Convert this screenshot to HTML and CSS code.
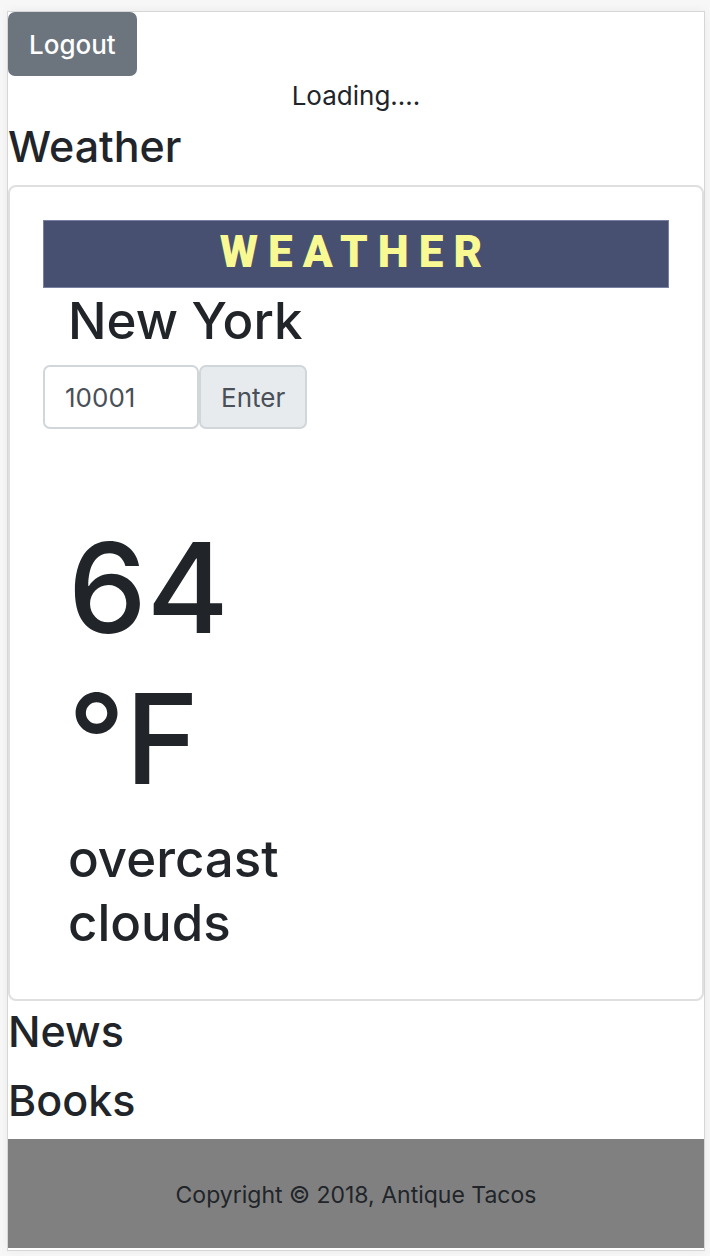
FILE: index.html
```html
<!DOCTYPE html>
<html lang="en">
<head>
<meta charset="utf-8">
<meta name="viewport" content="width=device-width, initial-scale=1">
<title>Dashboard</title>
<link rel="stylesheet" href="styles.css">
</head>
<body>
<div class="page">
  <header class="top">
    <button class="logout" type="button">Logout</button>
    <p class="loading">Loading....</p>
  </header>
  <main>
    <h2 class="section-title">Weather</h2>
    <section class="card">
      <h3 class="banner">WEATHER</h3>
      <h1 class="city">New York</h1>
      <form class="zip">
        <input class="zip-input" type="text" value="10001" aria-label="Zip code">
        <button class="zip-enter" type="button">Enter</button>
      </form>
      <div class="reading">
        <p class="temp">64 °F</p>
        <p class="sky">overcast clouds</p>
      </div>
    </section>
    <h2 class="section-title">News</h2>
    <h2 class="section-title">Books</h2>
  </main>
  <footer class="footer">Copyright © 2018, Antique Tacos</footer>
</div>
</body>
</html>
```
FILE: styles.css
```css
* { box-sizing: border-box; }
body {
  margin: 0;
  padding: 11px 5px 5px 7px;
  background: #f7f7f7;
  color: #212529;
  font-family: Inter, "Liberation Sans", sans-serif;
  font-size: 26px;
}
h1, h2, h3, p { margin: 0; font-weight: 500; }
.page {
  padding-bottom: 2px;
  background: #fff;
  border: 1px solid #d6d6d6;
  box-shadow: 0 0 10px rgba(0, 0, 0, 0.05);
}
.logout {
  display: block;
  height: 64px;
  padding: 0 21px;
  border: 0;
  border-radius: 7px;
  background: #6c757d;
  color: #fff;
  font: 500 26px Inter, sans-serif;
}
.loading { font-weight: 400; line-height: 40px; text-align: center; }
.section-title { font-size: 43px; line-height: 60px; padding-bottom: 9px; }
.card {
  border: 2px solid #dfdfdf;
  border-radius: 8px;
  padding: 33px;
}
.banner {
  height: 68px;
  border: 1px solid #7a80a0;
  background: #475070;
  color: #f9f993;
  font: 900 44px/62px Roboto, sans-serif;
  letter-spacing: 10px;
  text-align: center;
}
.city { font-size: 51px; line-height: 60px; padding: 3px 25px 14px; }
.zip { display: flex; }
.zip-input, .zip-enter {
  height: 64px;
  border: 2px solid #d1d6db;
  border-radius: 7px;
  color: #495057;
  font: 400 26px Inter, sans-serif;
  padding: 0 20px;
}
.zip-input { width: 156px; background: #fff; }
.zip-enter { background: #e7ebee; }
.reading { width: 270px; padding: 83px 25px 11px; }
.temp { font-size: 125px; line-height: 151px; }
.sky { font-size: 51px; line-height: 64px; padding-top: 13px; }
.footer {
  background: #808080;
  padding: 37px 0 34px;
  font-size: 23px;
  line-height: 38px;
  text-align: center;
}
```
